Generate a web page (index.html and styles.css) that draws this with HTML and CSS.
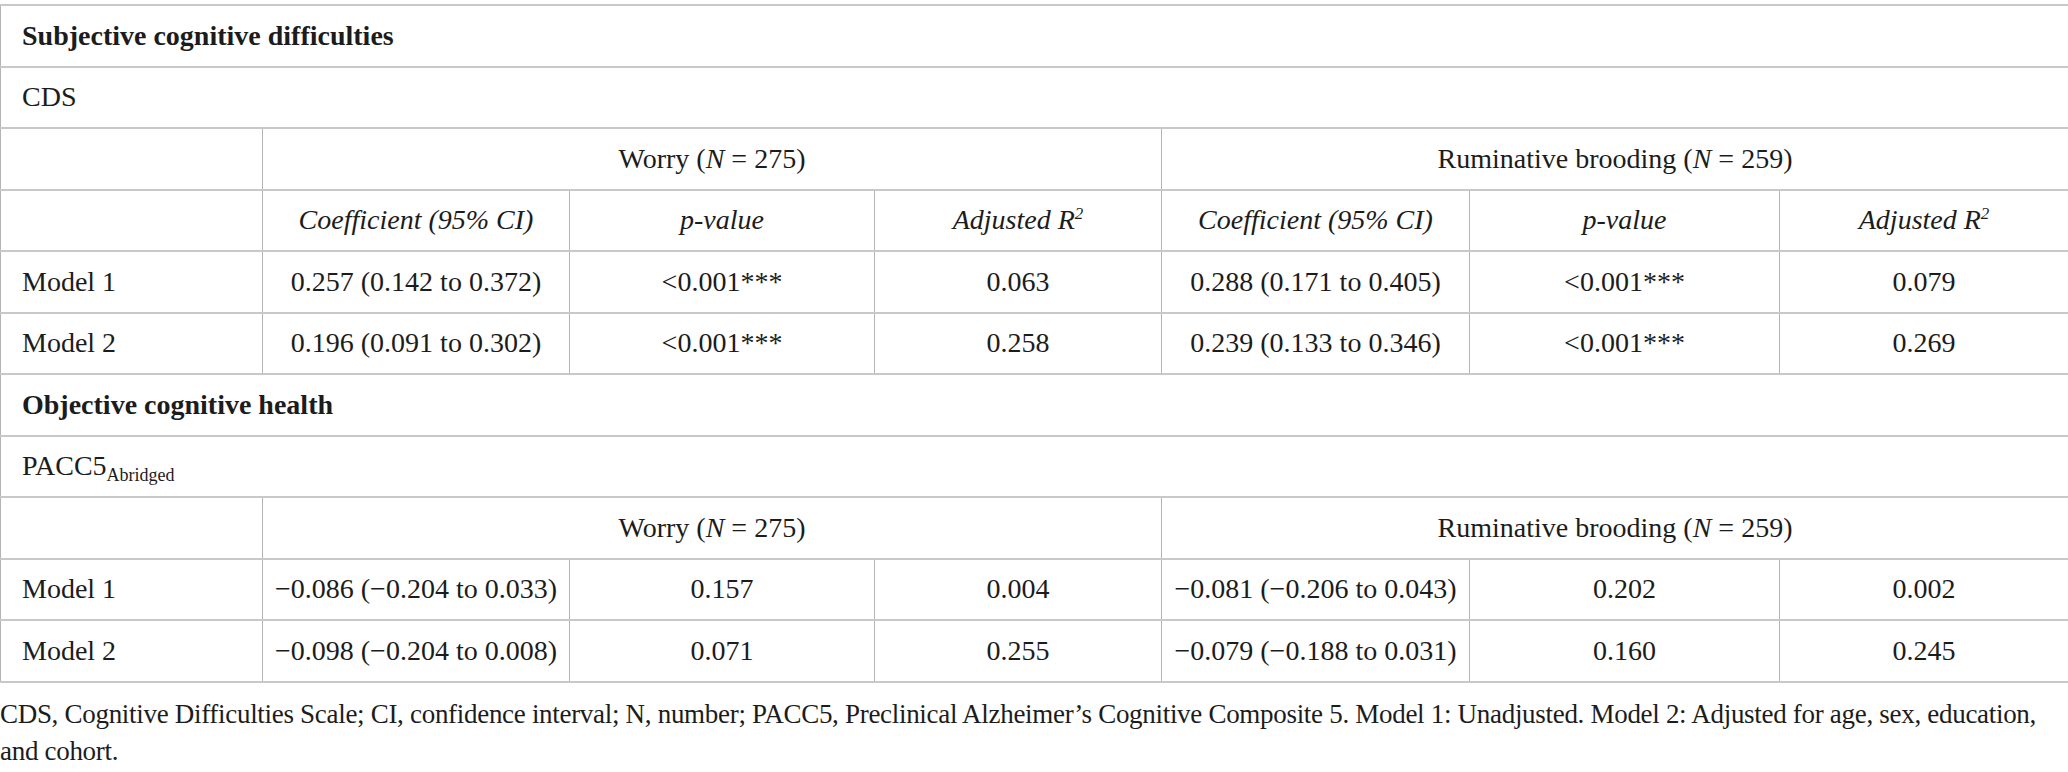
FILE: index.html
```html
<!DOCTYPE html>
<html lang="en">
<head>
    <meta charset="UTF-8">
    <title>Regression results</title>
    <link rel="stylesheet" href="styles.css">
</head>
<body>
    <table class="results">
        <colgroup>
            <col class="c-label">
            <col class="c-coef">
            <col class="c-p">
            <col class="c-r2">
            <col class="c-coef2">
            <col class="c-p2">
            <col class="c-r22">
        </colgroup>
        <tbody>
            <tr><td colspan="7" class="section">Subjective cognitive difficulties</td></tr>
            <tr><td colspan="7" class="measure">CDS</td></tr>
            <tr>
                <td></td>
                <td colspan="3">Worry (<i>N</i> = 275)</td>
                <td colspan="3">Ruminative brooding (<i>N</i> = 259)</td>
            </tr>
            <tr class="head">
                <td></td>
                <td>Coefficient (95% CI)</td>
                <td>p-value</td>
                <td>Adjusted R<sup>2</sup></td>
                <td>Coefficient (95% CI)</td>
                <td>p-value</td>
                <td>Adjusted R<sup>2</sup></td>
            </tr>
            <tr>
                <td class="measure">Model 1</td>
                <td>0.257 (0.142 to 0.372)</td>
                <td>&lt;0.001***</td>
                <td>0.063</td>
                <td>0.288 (0.171 to 0.405)</td>
                <td>&lt;0.001***</td>
                <td>0.079</td>
            </tr>
            <tr>
                <td class="measure">Model 2</td>
                <td>0.196 (0.091 to 0.302)</td>
                <td>&lt;0.001***</td>
                <td>0.258</td>
                <td>0.239 (0.133 to 0.346)</td>
                <td>&lt;0.001***</td>
                <td>0.269</td>
            </tr>
            <tr><td colspan="7" class="section">Objective cognitive health</td></tr>
            <tr><td colspan="7" class="measure">PACC5<sub>Abridged</sub></td></tr>
            <tr>
                <td></td>
                <td colspan="3">Worry (<i>N</i> = 275)</td>
                <td colspan="3">Ruminative brooding (<i>N</i> = 259)</td>
            </tr>
            <tr>
                <td class="measure">Model 1</td>
                <td>−0.086 (−0.204 to 0.033)</td>
                <td>0.157</td>
                <td>0.004</td>
                <td>−0.081 (−0.206 to 0.043)</td>
                <td>0.202</td>
                <td>0.002</td>
            </tr>
            <tr>
                <td class="measure">Model 2</td>
                <td>−0.098 (−0.204 to 0.008)</td>
                <td>0.071</td>
                <td>0.255</td>
                <td>−0.079 (−0.188 to 0.031)</td>
                <td>0.160</td>
                <td>0.245</td>
            </tr>
        </tbody>
    </table>

    <p class="note">CDS, Cognitive Difficulties Scale; CI, confidence interval; N, number; PACC5, Preclinical Alzheimer’s Cognitive Composite 5. Model 1: Unadjusted. Model 2: Adjusted for age, sex, education, and cohort.</p>
</body>
</html>
```

FILE: styles.css
```css
body {
    margin: 0;
    padding-top: 4px;
    font-family: 'Liberation Serif', 'Times New Roman', serif;
    font-size: 28px;
    color: #1c1c1c;
    background: #fff;
}

.results {
    width: 2068px;
    border-collapse: collapse;
    table-layout: fixed;
}

.c-label { width: 262px; }
.c-coef { width: 307px; }
.c-p { width: 305px; }
.c-r2 { width: 287px; }
.c-coef2 { width: 308px; }
.c-p2 { width: 310px; }
.c-r22 { width: 289px; }

.results td {
    height: 59.5px;
    padding: 0;
    text-align: center;
    vertical-align: middle;
    white-space: nowrap;
    border-top: 2px solid #c8c8c8;
    border-bottom: 2px solid #c8c8c8;
    border-left: 1px solid #b4b4b4;
    border-right: 1px solid #b4b4b4;
}

.results td.section,
.results td.measure {
    text-align: left;
    padding-left: 21px;
}

.section {
    font-weight: bold;
}

.head td {
    font-style: italic;
}

sup {
    font-size: 17px;
    line-height: 0;
    vertical-align: 10px;
}

sub {
    font-size: 18px;
    line-height: 0;
    vertical-align: -6px;
}

.note {
    margin: 13px 0 0;
    padding-right: 4px;
    line-height: 37px;
    font-size: 27px;
    letter-spacing: -0.3px;
}
```
